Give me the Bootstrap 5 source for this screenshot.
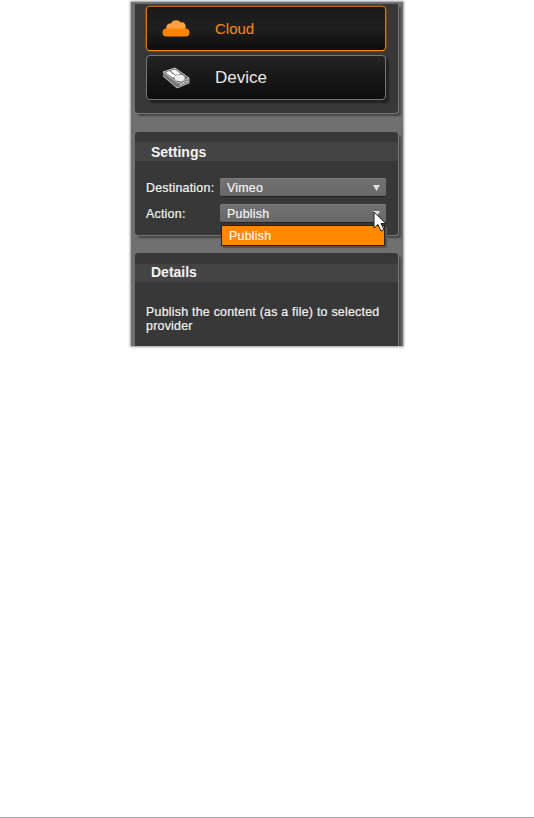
<!DOCTYPE html>
<html lang="en">
<head>
<meta charset="utf-8">
<meta name="viewport" content="width=device-width, initial-scale=1">
<title>Publish settings</title>
<link href="https://cdn.jsdelivr.net/npm/bootstrap@5.3.0/dist/css/bootstrap.min.css" rel="stylesheet">
<style>
body{font-family:"Liberation Sans",Arial,sans-serif;background:#fff;color:#f4f4f4;font-size:12.4px;letter-spacing:.24px;line-height:14px;height:818px;overflow:hidden;border-bottom:1px solid #a8a8a8}
.shell{width:272px;height:344px;margin:2px 0 0 131px;padding:2px 5px 0 4px;background:#707070;box-shadow:0 0 2px 1px #999;overflow:hidden}
.panel{background:#383838;border-radius:3px;box-shadow:1px 1px 0 #777,3px 3px 2px #444}
.panel-top{height:109px;border-radius:0 0 3px 3px;padding:2px 12px 0 11px}
.panel-settings{height:103px;margin-top:19px;padding-top:10px}
.panel-details{height:100px;margin-top:18px;padding-top:11px}
.choice{height:45px;padding:1px 0 0 15px;border:1px solid #777;border-radius:4px;background:linear-gradient(#242424,#151515 60%,#0d0d0d);color:#e8e8e8;font-size:17px;letter-spacing:0;box-shadow:3px 3px 2px #222}
.choice.selected{padding:0 0 0 15px;border:1px solid #d9780c;border-bottom-color:#ff8a00;border-top-color:#b8620d;background:linear-gradient(#191919,#202020 50%,#0c0c0c);color:#f98a1b;font-size:15px;box-shadow:0 0 0 .5px #a85a10}
.choice svg{width:28px;height:24px;margin-right:25px}
.title-bar{height:19px;background:#444;padding:1px 0 0 16px;font-size:14px;letter-spacing:0;font-weight:700}
.panel-details .title-bar{height:18px;padding:0 0 1px 16px}
.field{padding-left:11px;margin-top:17px}
.field + .field{margin-top:7px}
.field-name{width:74px}
.field-name,.picker,.option-list,.description{-webkit-text-stroke:.2px currentColor}
.picker{width:166px;height:19px;padding:2px 5px 0 7px;background:linear-gradient(#727272,#686868);border:0 solid #222;border-bottom-width:1px;border-radius:2px;box-shadow:inset 0 1px #7c7c7c}
.picker svg{width:9px;height:8px}
.option-list{top:21px;left:1px;width:164px;height:21px;background:#ff8800;border:1px solid #222;box-shadow:2px 2px 1px #555;padding-left:7px;z-index:2}
.pointer{left:153px;top:7px;width:14px;height:21px;z-index:3}
.description{margin-top:23px;padding-left:11px;line-height:14px}
</style>
<script defer src="https://cdn.jsdelivr.net/npm/bootstrap@5.3.0/dist/js/bootstrap.bundle.min.js"></script>
</head>
<body>
<main class="shell">
  <section class="panel panel-top d-flex flex-column gap-1">
    <button type="button" class="choice selected w-100 d-flex align-items-center">
      <svg viewBox="0 0 28 24"><path fill="#ffa040" d="M4.500 13C3.500 8 6 6 9 6.500C10 2.500 17 2 18.500 5.500C22 4.500 24.500 7 23.500 13Z"/><rect x=".5" y="11.500" width="27" height="8" rx="4" fill="#ff8200"/></svg>
      <span>Cloud</span>
    </button>
    <button type="button" class="choice w-100 d-flex align-items-center">
      <svg viewBox="0 0 28 24"><path fill="#777" d="M1 6V10L15 22L27 17V12L16 17Z"/><path fill="none" stroke="#bbb" d="M1 10L15 22L27 17V12"/><path fill="#666" stroke="#ccc" d="M1 6L13 2L27 12L16 17Z"/><path fill="#fff" d="M3.500 6.500L7.500 5L14 10.500L10.500 11.500ZM8.500 4.500L13 3.500L18.500 7.500L13.500 9Z"/><ellipse cx="17.500" cy="11.800" rx="5.300" ry="3.300" fill="#eee"/><path stroke="#ddd" stroke-width="1.500" stroke-dasharray="2 1" d="M18 18.500L26 15"/></svg>
      <span>Device</span>
    </button>
  </section>
  <section class="panel panel-settings">
    <h2 class="title-bar d-flex align-items-center mb-0">Settings</h2>
    <div class="field d-flex align-items-center">
      <span class="field-name">Destination:</span>
      <div class="picker flex-shrink-0 d-flex align-items-center justify-content-between"><span>Vimeo</span><svg viewBox="0 0 9 8"><path fill="#ddd" d="M1 1H8L4.500 7Z"/></svg></div>
    </div>
    <div class="field d-flex align-items-center">
      <span class="field-name">Action:</span>
      <div class="position-relative flex-shrink-0">
        <div class="picker d-flex align-items-center justify-content-between"><span>Publish</span><svg viewBox="0 0 9 8"><path fill="#ddd" d="M1 1H8L4.500 7Z"/></svg></div>
        <div class="option-list position-absolute d-flex align-items-center">Publish</div>
        <svg class="pointer position-absolute" viewBox="0 0 14 21"><path fill="#fff" stroke="#222" d="M1 1V17L5 13.500L8 20L11 18.500L8 12.500H13Z"/></svg>
      </div>
    </div>
  </section>
  <section class="panel panel-details">
    <h2 class="title-bar d-flex align-items-center mb-0">Details</h2>
    <p class="description mb-0">Publish the content (as a file) to selected provider</p>
  </section>
</main>
</body>
</html>
